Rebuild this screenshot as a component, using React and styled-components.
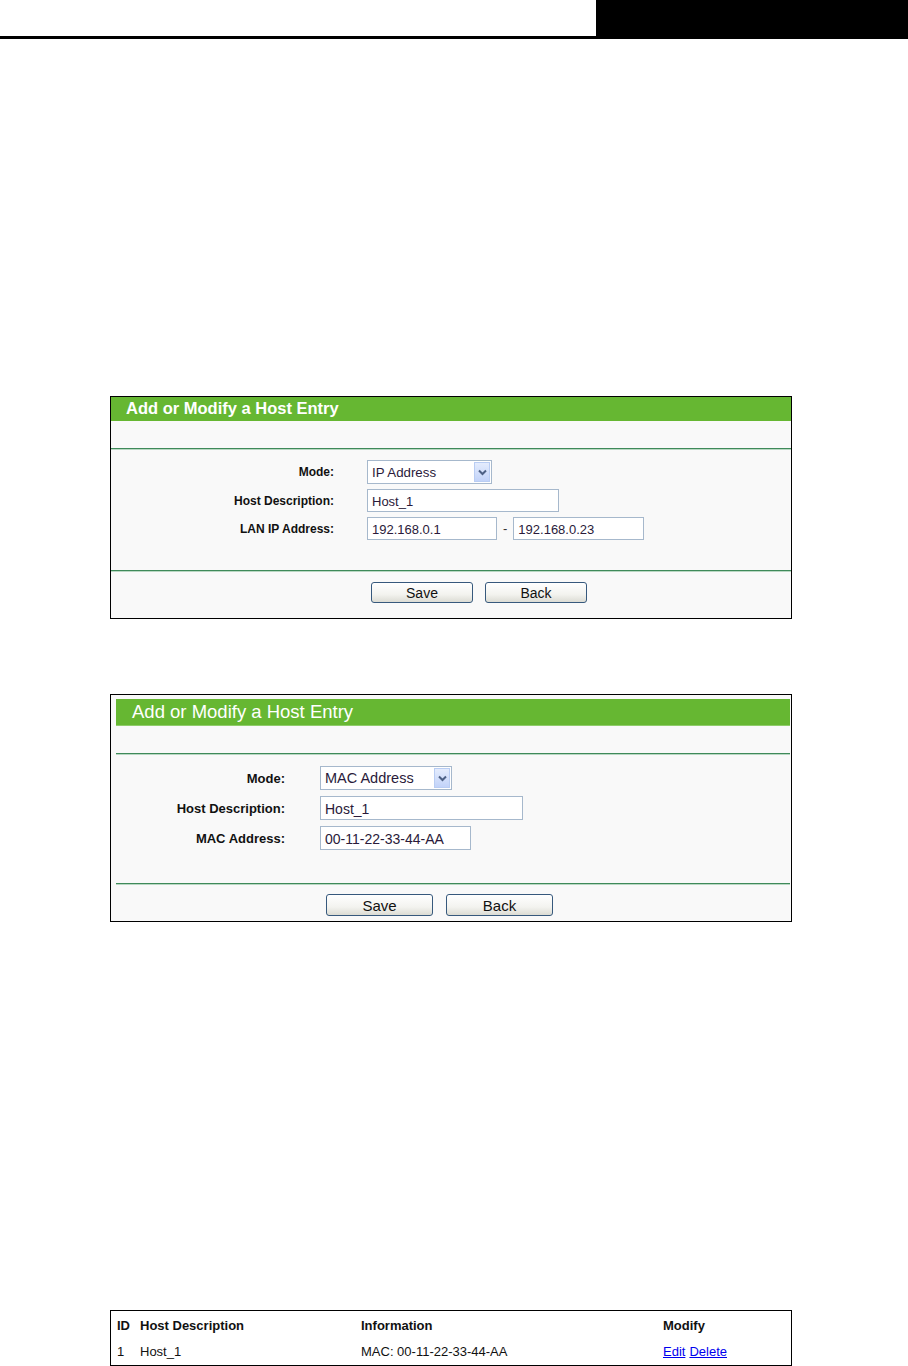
import React from 'react';
import styled, { createGlobalStyle } from 'styled-components';

const GlobalStyle = createGlobalStyle`
  body {
    margin: 0;
    background: #ffffff;
    font-family: "Liberation Sans", Arial, sans-serif;
  }
`;

const Page = styled.div`
  width: 908px;
  height: 1366px;
  display: flex;
  flex-direction: column;
  overflow: hidden;
`;

const TopBar = styled.div`
  display: flex;
  height: 39px;
`;

const TopRule = styled.div`
  flex: 1;
  border-bottom: 3px solid #000;
`;

const TopBlock = styled.div`
  width: 312px;
  background: #000;
`;

const Panel = styled.div`
  box-sizing: border-box;
  margin: ${(p) => p.$top}px 0 0 110px;
  width: 682px;
  border: 1px solid #000;
  background: #f9f9f9;
  padding: ${(p) => (p.$inset ? '4px 1px 0 5px' : '0')};
`;

const TitleBar = styled.div`
  height: ${(p) => (p.$large ? 26 : 24)}px;
  background: #66b732;
  color: #fff;
  font-size: ${(p) => (p.$large ? 18.5 : 16.5)}px;
  font-weight: ${(p) => (p.$large ? 'normal' : 'bold')};
  line-height: ${(p) => (p.$large ? 25 : 22)}px;
  padding-left: ${(p) => (p.$large ? 16 : 15)}px;
  border-bottom: ${(p) => (p.$large ? '1px solid #8fcc6a' : 'none')};
`;

const Band = styled.div`
  height: 27px;
  border-bottom: 1px solid #3f8a5a;
  box-shadow: 0 1px 0 #b9d8c3;
`;

const Form = styled.div`
  display: grid;
  grid-template-columns: ${(p) => p.$label}px auto;
  column-gap: ${(p) => p.$gap}px;
  row-gap: ${(p) => p.$rowGap}px;
  align-items: center;
  padding: ${(p) => p.$padTop}px 0 ${(p) => p.$padBottom}px;
  border-bottom: 1px solid #3f8a5a;
  box-shadow: 0 1px 0 #b9d8c3;
`;

const Label = styled.div`
  text-align: right;
  font-size: ${(p) => (p.$large ? 13 : 12)}px;
  font-weight: bold;
  color: #111;
`;

const Field = styled.div`
  display: flex;
  align-items: center;
  gap: 6px;
  font-size: 13px;
  color: #333;
`;

const TextInput = styled.input`
  box-sizing: border-box;
  width: ${(p) => p.$w}px;
  height: ${(p) => (p.$large ? 24 : 23)}px;
  border: 1px solid #a6b8cc;
  background: #fff;
  padding: 2px 4px 0;
  font-family: "Liberation Sans", Arial, sans-serif;
  font-size: ${(p) => (p.$large ? 14 : 13)}px;
  color: #2a1a3a;
  outline: none;
`;

const SelectBox = styled.div`
  box-sizing: border-box;
  width: ${(p) => p.$w}px;
  height: 24px;
  border: 1px solid #a6b8cc;
  background: #fff;
  display: flex;
  align-items: center;
  justify-content: space-between;
  padding: 1px 1px 1px 4px;
  font-size: ${(p) => (p.$large ? 14.5 : 13.3)}px;
  color: #2a1a3a;
`;

const ArrowBox = styled.div`
  width: 16px;
  height: 20px;
  box-sizing: border-box;
  border: 1px solid #b9cdf3;
  background: linear-gradient(#e4ecfd, #c2d3f9);
  display: flex;
  align-items: center;
  justify-content: center;
`;

const ButtonRow = styled.div`
  display: flex;
  gap: ${(p) => p.$gap}px;
  padding: ${(p) => p.$pad};
`;

const Button = styled.button`
  box-sizing: border-box;
  width: ${(p) => p.$w}px;
  height: ${(p) => p.$h}px;
  border: 1px solid #37597d;
  border-radius: 3px;
  background: linear-gradient(#ffffff, #f3f3ef 60%, #dcdcd4);
  font-family: "Liberation Sans", Arial, sans-serif;
  font-size: ${(p) => (p.$large ? 15 : 14)}px;
  color: #111;
  padding: 0;
`;

const Table = styled.div`
  box-sizing: border-box;
  margin: ${(p) => p.$top}px 0 0 110px;
  width: 682px;
  border: 1px solid #000;
  padding: 7px 0 6px 6px;
  display: grid;
  grid-template-columns: 23px 221px 302px auto;
  row-gap: 11px;
  font-size: 13px;
  color: #111;
`;

const HeadCell = styled.div`
  font-weight: bold;
  line-height: 15px;
`;

const Cell = styled.div`
  line-height: 15px;
`;

const LinkText = styled.span`
  color: #0000ee;
  text-decoration: underline;
  margin-right: 4px;
`;

function Chevron() {
  return (
    <svg width="9" height="7" viewBox="0 0 9 7">
      <path d="M1 1.5 L4.5 5 L8 1.5" fill="none" stroke="#4d6185" strokeWidth="2" />
    </svg>
  );
}

function Row({ row, large }) {
  return (
    <>
      <Label $large={large}>{row.label}</Label>
      <Field>
        {row.inputs.map((inp, i) => (
          <React.Fragment key={i}>
            {i > 0 && <span>-</span>}
            <TextInput $w={inp.w} $large={large} defaultValue={inp.value} />
          </React.Fragment>
        ))}
      </Field>
    </>
  );
}

function HostForm({ large, mode, rows, top, label, gap, rowGap, padTop, padBottom, selectW, btnPad, btnW, btnH, btnGap }) {
  return (
    <Panel $top={top} $inset={large}>
      <TitleBar $large={large}>Add or Modify a Host Entry</TitleBar>
      <Band />
      <Form $label={label} $gap={gap} $rowGap={rowGap} $padTop={padTop} $padBottom={padBottom}>
        <Label $large={large}>Mode:</Label>
        <Field>
          <SelectBox $w={selectW} $large={large}>
            <span>{mode}</span>
            <ArrowBox>
              <Chevron />
            </ArrowBox>
          </SelectBox>
        </Field>
        {rows.map((row) => (
          <Row key={row.label} row={row} large={large} />
        ))}
      </Form>
      <ButtonRow $gap={btnGap} $pad={btnPad}>
        <Button $w={btnW} $h={btnH} $large={large}>Save</Button>
        <Button $w={btnW} $h={btnH} $large={large}>Back</Button>
      </ButtonRow>
    </Panel>
  );
}

export default function App() {
  return (
    <Page>
      <GlobalStyle />
      <TopBar>
        <TopRule />
        <TopBlock />
      </TopBar>

      <HostForm
        top={357}
        mode="IP Address"
        label={223}
        gap={33}
        rowGap={5}
        padTop={11}
        padBottom={30}
        selectW={125}
        btnPad="11px 0 15px 260px"
        btnW={102}
        btnH={21}
        btnGap={12}
        rows={[
          { label: 'Host Description:', inputs: [{ w: 192, value: 'Host_1' }] },
          {
            label: 'LAN IP Address:',
            inputs: [
              { w: 130, value: '192.168.0.1' },
              { w: 131, value: '192.168.0.23' },
            ],
          },
        ]}
      />

      <HostForm
        large
        top={75}
        mode="MAC Address"
        label={169}
        gap={35}
        rowGap={6}
        padTop={12}
        padBottom={33}
        selectW={132}
        btnPad="10px 0 5px 210px"
        btnW={107}
        btnH={22}
        btnGap={13}
        rows={[
          { label: 'Host Description:', inputs: [{ w: 203, value: 'Host_1' }] },
          { label: 'MAC Address:', inputs: [{ w: 151, value: '00-11-22-33-44-AA' }] },
        ]}
      />

      <Table $top={388}>
        <HeadCell>ID</HeadCell>
        <HeadCell>Host Description</HeadCell>
        <HeadCell>Information</HeadCell>
        <HeadCell>Modify</HeadCell>
        <Cell>1</Cell>
        <Cell>Host_1</Cell>
        <Cell>MAC: 00-11-22-33-44-AA</Cell>
        <Cell>
          <LinkText>Edit</LinkText>
          <LinkText>Delete</LinkText>
        </Cell>
      </Table>
    </Page>
  );
}
